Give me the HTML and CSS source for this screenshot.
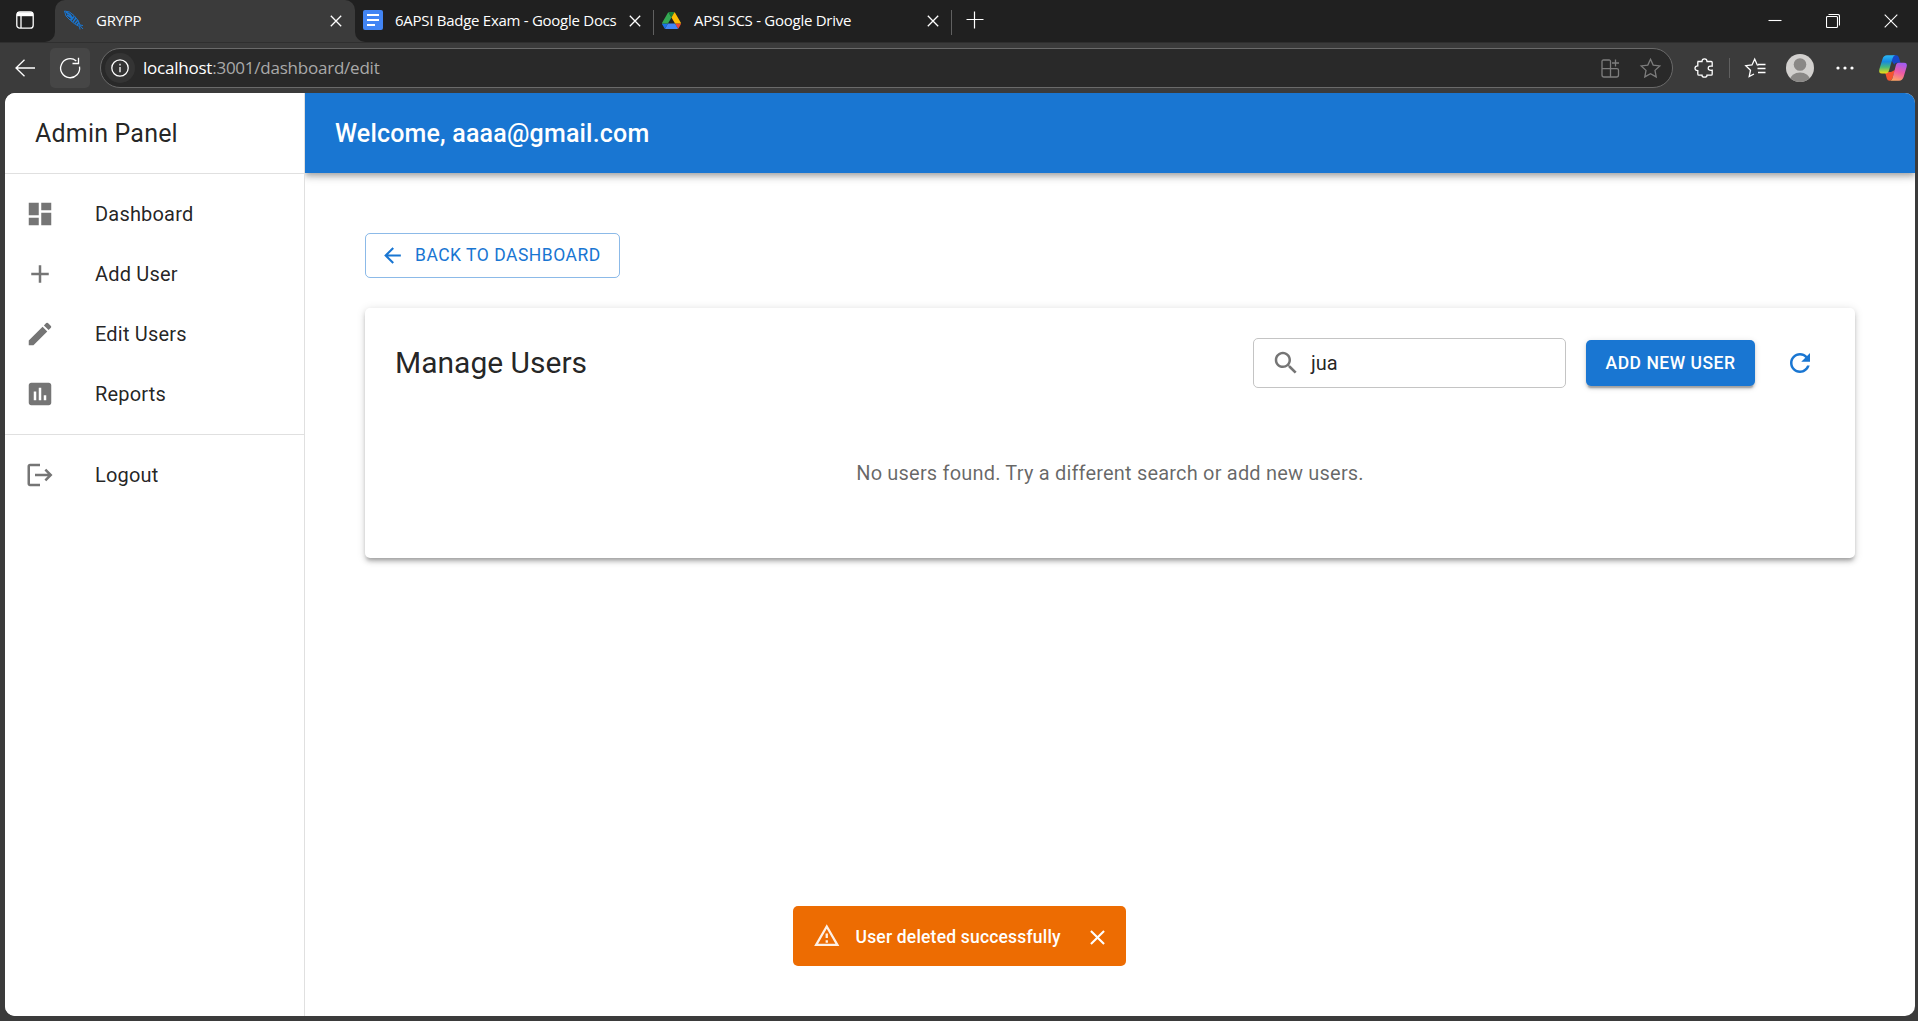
FILE: index.html
```html
<!DOCTYPE html>
<html lang="en">
<head>
<meta charset="utf-8">
<title>GRYPP</title>
<link rel="stylesheet" href="styles.css">
</head>
<body>
<div class="tabstrip">
  <div class="strip-start">
    <svg width="18" height="18" viewBox="0 0 18 18" fill="none" stroke="#fff" stroke-width="1.3"><rect x=".8" y=".8" width="16.4" height="16.4" rx="3"/><path d="M5 5v12"/><path d="M1 3.2h16" stroke-width="4"/></svg>
  </div>
  <div class="tab-slot">
    <div class="tab tab-active">
      <svg class="fav" width="20" height="20" viewBox="0 0 20 20" fill="none" stroke="#1976d2"><path d="M.5 1l5 1 4.500 3.500 4 5 2 4.500 3 .5M.5 1l1.500 5 4.500 4.500 5 4 4 2 .5 3M15 14.500l4 4.500" stroke-width="1"/><path d="M2 2l4 2.500 2 3-1.500 2.500M3 5l5 3M7 10.500l3-4M9 12l3-4M11 13.500l3-3.500M13 15l2-2.500" stroke-width="1.500"/></svg>
      <span class="tab-title">GRYPP</span>
      <svg class="tab-close" width="12" height="12" viewBox="0 0 12 12"><path d="M.8.8l10.4 10.4M11.2.8L.8 11.2"/></svg>
    </div>
  </div>
  <div class="strip-rest">
    <div class="tab tab-docs">
      <svg class="fav" width="20" height="20" viewBox="0 0 20 20"><rect width="20" height="20" rx="2" fill="#4285f4"/><path d="M4 5h12M4 10h12M4 15h8" stroke="#fff" stroke-width="2.2"/></svg>
      <span class="tab-title title-docs">6APSI Badge Exam - Google Docs</span>
      <svg class="tab-close" width="12" height="12" viewBox="0 0 12 12"><path d="M.8.8l10.4 10.4M11.2.8L.8 11.2"/></svg>
    </div>
    <i class="tab-sep"></i>
    <div class="tab tab-drive">
      <svg class="fav" width="19" height="17" viewBox="0 0 87.3 78"><path d="M6.6 66.85l3.85 6.65c.8 1.4 1.95 2.5 3.3 3.3L27.5 53H0c0 1.55.4 3.1 1.2 4.5z" fill="#1a73e8"/><path d="M43.65 25L29.9 1.2c-1.35.8-2.5 1.9-3.3 3.3L1.2 48.5C.4 49.9 0 51.45 0 53h27.5z" fill="#34a853"/><path d="M73.55 76.8c1.35-.8 2.5-1.9 3.3-3.3l9.25-16c.8-1.4 1.2-2.95 1.2-4.5H59.8l5.85 11.5z" fill="#ea4335"/><path d="M43.65 25L57.4 1.2C56.05.4 54.5 0 52.9 0H34.4c-1.6 0-3.15.45-4.5 1.2z" fill="#188038"/><path d="M59.8 53H27.5L13.75 76.8c1.35.8 2.9 1.2 4.5 1.2h50.8c1.6 0 3.15-.45 4.5-1.2z" fill="#4285f4"/><path d="M73.4 26.5L60.7 4.5c-.8-1.4-1.95-2.5-3.3-3.3L43.65 25 59.8 53h27.45c0-1.55-.4-3.1-1.2-4.5z" fill="#fbbc04"/></svg>
      <span class="tab-title title-drive">APSI SCS - Google Drive</span>
      <svg class="tab-close" width="12" height="12" viewBox="0 0 12 12"><path d="M.8.8l10.4 10.4M11.2.8L.8 11.2"/></svg>
    </div>
    <i class="tab-sep"></i>
    <svg class="new-tab" width="18" height="18" viewBox="0 0 18 18"><path d="M8.500 .5v17M.5 8.500h17"/></svg>
    <div class="win-controls">
      <svg width="14" height="14" viewBox="0 0 14 14"><path d="M.5 6.5h13"/></svg>
      <svg width="14" height="14" viewBox="0 0 14 14"><rect x=".5" y="2.5" width="11" height="11" rx="1"/><path d="M2.5.5h9.3q1.7 0 1.7 1.7v9.3"/></svg>
      <svg width="14" height="14" viewBox="0 0 14 14"><path d="M.7.7l12.6 12.6M13.3.7L.7 13.3"/></svg>
    </div>
  </div>
</div>

<div class="toolbar">
  <svg class="nav-back" width="20" height="18" viewBox="0 0 20 18"><path d="M9.5.7L1 9l8.500 8.300M1 9h19"/></svg>
  <div class="reload">
    <svg width="22" height="22" viewBox="0 0 22 22"><path d="M20.500 9.600A9.500 9.500 0 1 1 17.300 4M19.500.800v5.700h-6"/></svg>
  </div>
  <div class="address">
    <div class="site-info">
      <svg width="18" height="18" viewBox="0 0 18 18"><circle cx="9" cy="9" r="8.200"/><path d="M9 8v5.200M9 4.800v1.700"/></svg>
    </div>
    <div class="url"><b>localhost</b>:3001/dashboard/edit</div>
    <svg class="addr-apps" width="19" height="19" viewBox="0 0 19 19"><path d="M9.500 9.700V2.500q0-1.500-1.500-1.500H2.500Q1 1 1 2.500V16q0 2 2 2h12.500q2 0 2-2v-4.700q0-1.600-1.600-1.600zM1 9.700h8.500V18M14.500.5v7M11 4h7"/></svg>
    <svg class="addr-star" width="21" height="20" viewBox="0 0 21 20"><path d="M10.500 1.200l2.700 5.900 6.600.8-4.800 4.500 1.200 6.500-5.700-3.200-5.700 3.200L6 12.400 1.200 7.900l6.600-.8z"/></svg>
  </div>
  <svg class="ext" width="20" height="20" viewBox="0 0 20 20"><path d="M4 3.500h4q0-2.700 2.500-2.700T13 3.500h4.200q1 0 1 1v3.700q-4-.5-4 2t4 2v4q0 1-1 1H13q0 2-2.500 2T8 17.200H5q-1.200 0-1.200-1.200v-3.300Q1 12.700 1 10.300t2.800-2.400V4.500z"/></svg>
  <i class="tool-sep"></i>
  <svg class="favs" width="21" height="20" viewBox="0 0 21 20"><path d="M13.500 7.200l-1.200-.3L9.700 1 7 6.900.8 7.700l4.700 4.500L4.200 18.500 9 16M13 6.500h7.500M12.500 10.500h8M13 14.500h7.500"/></svg>
  <svg class="avatar" width="28" height="28" viewBox="0 0 28 28"><defs><clipPath id="av"><circle cx="14" cy="14" r="14"/></clipPath></defs><g clip-path="url(#av)"><path d="M0 0h28v28H0z" fill="#d2d0ce"/><circle cx="14" cy="10.500" r="6.300" fill="#8a8886"/><ellipse cx="14" cy="26" rx="10" ry="7.500" fill="#8a8886"/></g></svg>
  <svg class="more" width="18" height="4" viewBox="0 0 18 4"><circle cx="2" cy="2" r="1.600"/><circle cx="9" cy="2" r="1.600"/><circle cx="16" cy="2" r="1.600"/></svg>
  <svg class="copilot" width="28" height="26" viewBox="0 0 28 26">
    <defs>
      <linearGradient id="c1" x1="0" y1="0" x2="0" y2="1"><stop offset="0" stop-color="#2bb8f5"/><stop offset=".35" stop-color="#1689e0"/><stop offset=".65" stop-color="#47b97a"/><stop offset="1" stop-color="#f3dc10"/></linearGradient>
      <linearGradient id="c2" x1=".6" y1="0" x2=".3" y2="1"><stop offset="0" stop-color="#a35cf0"/><stop offset=".5" stop-color="#ee5aa4"/><stop offset="1" stop-color="#ffa663"/></linearGradient>
    </defs>
    <path d="M14 .3h3.200q2 0 2.700 2.200l1.600 5.200h-3.700q-2 0-2.500 2L12 5z" fill="#1747c7"/>
    <path d="M6 17h6l4-2-2.500 8q-.8 2.700-3 2.700-2 0-2.700-2.200z" fill="#f5532f"/>
    <path d="M8 .3h8.500q-2 0-3 3.200L10 15.500Q9.200 18.500 6.500 18.500H3Q-.8 18.500.4 14L3.500 4Q4.700.3 8 .3z" fill="url(#c1)"/>
    <path d="M19.500 7.700H25q3.800 0 2.600 4.300l-3 10q-1.200 3.700-4.500 3.700H10.500q2.200 0 3.200-3.200l3-11.500q.8-3.300 2.800-3.300z" fill="url(#c2)"/>
  </svg>
</div>

<div class="page">
  <aside class="sidebar">
    <div class="brand">Admin Panel</div>
    <nav class="menu">
      <a class="item"><svg viewBox="0 0 24 24"><path d="M3 13h8V3H3v10zm0 8h8v-6H3v6zm10 0h8V11h-8v10zm0-18v6h8V3h-8z"/></svg>Dashboard</a>
      <a class="item"><svg viewBox="0 0 24 24"><path d="M19 13h-6v6h-2v-6H5v-2h6V5h2v6h6v2z"/></svg>Add User</a>
      <a class="item"><svg viewBox="0 0 24 24"><path d="M3 17.250V21h3.750L17.810 9.940l-3.750-3.750L3 17.250zM20.710 7.040c.39-.39.39-1.020 0-1.410l-2.340-2.340a.996.996 0 0 0-1.410 0l-1.830 1.830 3.750 3.750 1.830-1.830z"/></svg>Edit Users</a>
      <a class="item"><svg viewBox="0 0 24 24"><path d="M19 3H5c-1.100 0-2 .9-2 2v14c0 1.100.9 2 2 2h14c1.100 0 2-.9 2-2V5c0-1.100-.9-2-2-2zM9 17H7v-7h2v7zm4 0h-2V7h2v10zm4 0h-2v-4h2v4z"/></svg>Reports</a>
    </nav>
    <nav class="menu menu-last">
      <a class="item"><svg viewBox="0 0 24 24"><path d="M17 7l-1.410 1.410L18.170 11H8v2h10.170l-2.580 2.580L17 17l5-5zM4 5h8V3H4c-1.100 0-2 .9-2 2v14c0 1.100.9 2 2 2h8v-2H4V5z"/></svg>Logout</a>
    </nav>
  </aside>
  <div class="content">
    <header class="appbar">Welcome, aaaa@gmail.com</header>
    <main class="main">
      <button class="btn-back"><svg viewBox="0 0 24 24"><path d="M20 11H7.830l5.590-5.590L12 4l-8 8 8 8 1.410-1.410L7.830 13H20v-2z"/></svg><span>BACK TO DASHBOARD</span></button>
      <section class="card">
        <div class="card-head">
          <h1 class="title">Manage Users</h1>
          <div class="search"><svg viewBox="0 0 24 24"><path d="M15.500 14h-.79l-.28-.27C15.410 12.590 16 11.110 16 9.500 16 5.910 13.090 3 9.500 3S3 5.910 3 9.500 5.910 16 9.500 16c1.610 0 3.090-.59 4.230-1.570l.27.28v.79l5 4.990L20.490 19l-4.990-5zm-6 0C7.010 14 5 11.990 5 9.500S7.010 5 9.500 5 14 7.010 14 9.500 11.990 14 9.500 14z"/></svg><span>jua</span></div>
          <button class="btn-add">ADD NEW USER</button>
          <div class="refresh"><svg viewBox="0 0 24 24"><path d="M17.650 6.350C16.200 4.900 14.210 4 12 4c-4.420 0-7.990 3.580-7.990 8s3.570 8 7.990 8c3.730 0 6.840-2.550 7.730-6h-2.080c-.82 2.330-3.040 4-5.650 4-3.310 0-6-2.690-6-6s2.690-6 6-6c1.660 0 3.140.69 4.220 1.780L13 11h7V4l-2.350 2.350z"/></svg></div>
        </div>
        <p class="empty">No users found. Try a different search or add new users.</p>
      </section>
    </main>
  </div>
</div>

<div class="toast">
  <svg class="toast-icon" viewBox="0 0 24 24"><path d="M12 5.990L19.530 19H4.470L12 5.990M12 2L1 21h22L12 2zm1 14h-2v2h2v-2zm0-6h-2v4h2v-4z"/></svg>
  <span class="toast-text">User deleted successfully</span>
  <svg class="toast-close" viewBox="0 0 24 24"><path d="M19 6.410L17.590 5 12 10.590 6.410 5 5 6.410 10.590 12 5 17.590 6.410 19 12 13.410 17.590 19 19 17.590 13.410 12z"/></svg>
</div>
</body>
</html>
```
FILE: styles.css
```css
* { box-sizing: border-box; }
body {
  margin: 0;
  height: 1021px;
  display: flex;
  flex-direction: column;
  overflow: hidden;
  background: #3b3b3b;
  font-family: Roboto, sans-serif;
}
svg { display: block; flex: none; }

/* tab strip */
.tabstrip {
  display: flex;
  height: 42px;
  flex: none;
  font-family: "Open Sans", "Noto Sans", sans-serif;
  font-size: 15px;
  color: #fff;
}
.strip-start {
  width: 55px;
  padding: 11px 0 0 16px;
  background: #202020;
  border-bottom-right-radius: 10px;
}
.tab-slot {
  width: 300px;
  background: linear-gradient(#202020 50%, #3b3b3b 50%);
}
.strip-rest {
  flex: 1;
  display: flex;
  align-items: center;
  background: #202020;
  border-bottom-left-radius: 10px;
}
.tab { display: flex; align-items: center; height: 42px; padding-bottom: 2px; }
.tab-active {
  padding-left: 9px;
  padding-right: 13px;
  background: #3b3b3b;
  border-radius: 10px 10px 0 0;
}
.fav { margin-right: 12px; }
.tab-title { flex: 1; white-space: nowrap; line-height: 20px; letter-spacing: -0.27px; }
.tab-close { fill: none; stroke: #fff; stroke-width: 1.3; margin-top: 1px; }
.tab-docs { width: 298px; padding: 0 12px 2px 8px; }
.tab-drive { width: 297px; padding: 0 12px 2px 8px; }
.tab-drive .fav { margin-right: 13px; }
.tab-sep { width: 1px; height: 25px; background: #606060; margin-top: 2px; }
.new-tab { margin: -3px 0 0 14px; fill: none; stroke: #fff; stroke-width: 1.2; }
.win-controls {
  margin-left: auto;
  display: flex;
  gap: 44px;
  padding-right: 20px;
  fill: none;
  stroke: #fff;
  stroke-width: 1.1;
}

/* toolbar */
.toolbar {
  display: flex;
  align-items: center;
  height: 51px;
  flex: none;
  padding: 0 11px 0 15px;
  fill: none;
  stroke: #fff;
  stroke-width: 1.3;
  border-top: 1px solid #2f2f2f;
}
.toolbar svg { overflow: visible; }
.reload {
  display: flex;
  align-items: center;
  justify-content: center;
  width: 40px;
  height: 40px;
  margin: 0 10px 0 15px;
  border-radius: 5px;
  background: #464646;
}
.address {
  display: flex;
  align-items: center;
  width: 1573px;
  height: 40px;
  padding: 0 11px 0 4px;
  border: 1px solid #6a6a6a;
  border-radius: 20px;
  background: #292929;
}
.site-info {
  display: flex;
  align-items: center;
  justify-content: center;
  width: 30px;
  height: 30px;
  border-radius: 50%;
  background: #343434;
}
.url {
  flex: 1;
  margin-left: 8px;
  font-family: "Open Sans", "Noto Sans", sans-serif;
  font-size: 17px;
  line-height: 24px;
  letter-spacing: -.23px;
  color: #a9a9a9;
}
.url b { font-weight: 400; color: #fff; }
.addr-apps, .addr-star { stroke: #7d7d7d; }
.addr-apps { margin-right: 20px; }
.ext { margin-left: 21px; }
.tool-sep { width: 1px; height: 20px; margin: 0 15px 0 15px; background: #606060; }
.avatar { margin-left: 20px; stroke: none; }
.more { margin-left: 22px; fill: #fff; stroke: none; }
.copilot { margin-left: auto; stroke: none; }

/* web page */
.page {
  display: flex;
  width: 1910px;
  height: 923px;
  margin-left: 5px;
  overflow: hidden;
  border-radius: 10px;
  background: #fff;
}
.sidebar {
  position: relative;
  z-index: 1;
  width: 300px;
  border-right: 1px solid #e0e0e0;
  background: #fff;
  color: rgba(0, 0, 0, .87);
}
.brand {
  height: 81px;
  padding: 1px 0 0 30px;
  border-bottom: 1px solid #e0e0e0;
  font-size: 25px;
  line-height: 80px;
  letter-spacing: .0075em;
}
.menu { padding: 10px 0; border-bottom: 1px solid #e0e0e0; }
.menu-last { border-bottom: 0; }
.item {
  display: flex;
  align-items: center;
  height: 60px;
  padding-left: 20px;
  gap: 40px;
  font-size: 20px;
  letter-spacing: .00938em;
}
.item svg { width: 30px; height: 30px; fill: #757575; }
.content { flex: 1; }
.appbar {
  height: 80px;
  padding: 1px 0 0 30px;
  background: #1976d2;
  color: #fff;
  font-size: 25px;
  font-weight: 460;
  line-height: 80px;
  letter-spacing: .0075em;
  box-shadow: 0 2.500px 5px -1px rgba(0,0,0,.2), 0 5px 6px rgba(0,0,0,.14), 0 1px 12.500px rgba(0,0,0,.12);
}
.main { padding: 60px; }
button { font-family: inherit; margin: 0; }
.btn-back {
  display: flex;
  align-items: center;
  gap: 10px;
  width: 255px;
  height: 45px;
  padding: 0 0 0 14px;
  border: 1px solid rgba(25, 118, 210, .5);
  border-radius: 5px;
  background: none;
  color: #1976d2;
  font-size: 17.500px;
  letter-spacing: .02857em;
  white-space: nowrap;
}
.btn-back svg { width: 25px; height: 25px; fill: #1976d2; }
.btn-back span { padding-bottom: 2px; }
.card {
  height: 250px;
  margin-top: 30px;
  padding: 30px;
  border-radius: 5px;
  box-shadow: 0 3.750px 3.750px -2.500px rgba(0,0,0,.2), 0 3.750px 5px rgba(0,0,0,.14), 0 1.250px 10px rgba(0,0,0,.12);
}
.card-head { display: flex; align-items: center; height: 50px; }
.title { flex: 1; margin: 0; padding-bottom: 2px; font-size: 30px; font-weight: 400; color: rgba(0,0,0,.87); }
.search {
  display: flex;
  align-items: center;
  gap: 10px;
  width: 313px;
  height: 50px;
  padding-left: 17px;
  border: 1px solid #c4c4c4;
  border-radius: 5px;
  font-size: 20px;
  color: rgba(0,0,0,.87);
}
.search svg { width: 30px; height: 30px; fill: #757575; }
.btn-add {
  width: 169px;
  height: 46px;
  margin: 0 20px;
  padding: 0;
  border: 0;
  border-radius: 5px;
  background: #1976d2;
  color: #fff;
  font-size: 17.500px;
  font-weight: 460;
  letter-spacing: .02857em;
  box-shadow: 0 3.750px 1.250px -2.500px rgba(0,0,0,.2), 0 2.500px 2.500px rgba(0,0,0,.14), 0 1.250px 6.250px rgba(0,0,0,.12);
}
.refresh { padding: 10px; }
.refresh svg { width: 30px; height: 30px; fill: #1976d2; }
.empty {
  margin: 70px 0 0;
  text-align: center;
  font-size: 20px;
  line-height: 30px;
  letter-spacing: .00938em;
  color: rgba(0,0,0,.6);
}

/* snackbar floating over the page */
.toast {
  position: absolute;
  left: 793px;
  top: 906px;
  display: flex;
  align-items: center;
  width: 333px;
  height: 60px;
  padding: 0 16px 0 20px;
  border-radius: 5px;
  background: #ed6c02;
  color: #fff;
  fill: #fff;
}
.toast-icon { width: 27.500px; height: 27.500px; margin-right: 15px; opacity: .9; }
.toast-text { flex: 1; padding-top: 2px; font-size: 17.500px; font-weight: 460; letter-spacing: .01071em; white-space: nowrap; }
.toast-close { width: 25px; height: 25px; margin-top: 2px; }
```
